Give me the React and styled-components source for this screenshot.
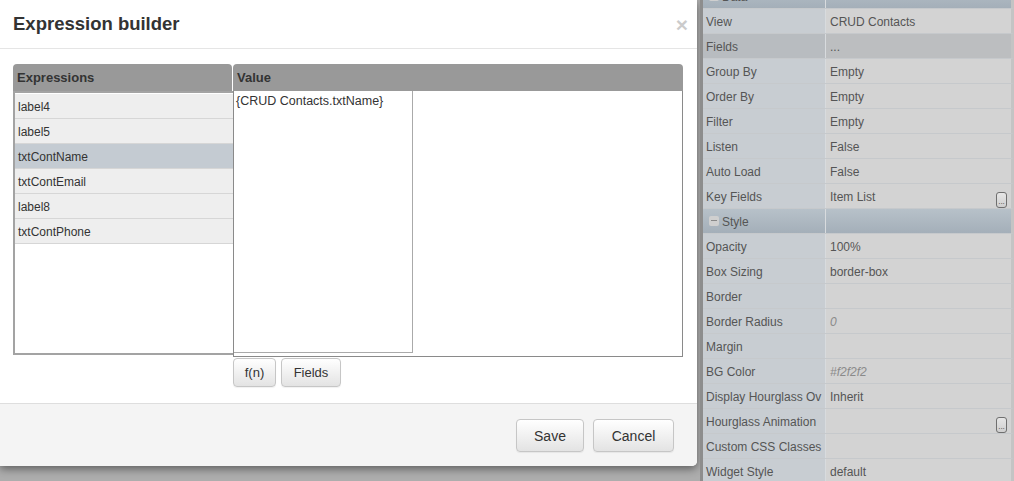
import React from "react";
import styled, { createGlobalStyle } from "styled-components";

const Global = createGlobalStyle`
  html, body { margin: 0; padding: 0; }
  body {
    width: 1014px; height: 481px; overflow: hidden;
    font-family: "Liberation Sans", Arial, sans-serif;
    background: #adadad;
  }
`;

const Page = styled.div`
  display: flex;
  width: 1014px;
  height: 481px;
  overflow: hidden;
`;

const Backdrop = styled.div`
  width: 700px;
  flex: none;
  background: #adadad;
`;

const Modal = styled.div`
  width: 697px;
  height: 466px;
  background: #fff;
  display: flex;
  flex-direction: column;
  border-radius: 0 0 5px 0;
  box-shadow: 0 3px 9px rgba(0, 0, 0, 0.45);
  overflow: hidden;
`;

const ModalHeader = styled.div`
  height: 48px;
  border-bottom: 1px solid #e5e5e5;
  display: flex;
  align-items: center;
  justify-content: space-between;
  padding: 0 9px 0 13px;
  box-sizing: content-box;
`;

const Title = styled.h3`
  margin: 0;
  font-size: 18.5px;
  font-weight: bold;
  color: #333;
`;

const Close = styled.span`
  font-size: 21px;
  font-weight: bold;
  color: #000;
  opacity: 0.2;
  line-height: 1;
`;

const ModalBody = styled.div`
  flex: 1;
  padding: 15px 14px 0 13px;
`;

const Grid = styled.div`
  display: grid;
  grid-template-columns: 220px 450px;
  grid-template-rows: 27px 266px;
`;

const HeadCell = styled.div`
  background: #999;
  border-radius: 4px 4px 0 0;
  font-size: 13px;
  font-weight: bold;
  color: #333;
  padding: 6px 4px 0;
  margin-right: ${(p) => (p.$gap ? "1px" : "0")};
  box-sizing: border-box;
`;

const ExprList = styled.div`
  height: 264px;
  border: 2px solid #a3a3a3;
  border-right-width: 1px;
  box-sizing: border-box;
  width: 221px;
  background: #fff;
  display: flex;
  flex-direction: column;
  padding-top: 1px;
`;

const ExprItem = styled.div`
  height: 25px;
  box-sizing: border-box;
  border-bottom: 1px solid #d6d6d6;
  background: ${(p) => (p.$selected ? "#c4cbd2" : "#eeeeee")};
  font-size: 12px;
  color: #333;
  padding: 6px 0 0 3px;
`;

const ValueArea = styled.div`
  height: 266px;
  border-left: 1px solid #8a8a8a;
  border-right: 1px solid #8a8a8a;
  border-bottom: 1px solid #8a8a8a;
  box-sizing: border-box;
  background: #fff;
  padding: 0 0 3px 0;
`;

const ValueText = styled.div`
  width: 179px;
  height: 262px;
  border: 1px solid #aaa;
  border-left: none;
  border-top: none;
  box-sizing: border-box;
  font-size: 12.5px;
  color: #333;
  padding: 3px 0 0 2px;
`;

const Tools = styled.div`
  display: flex;
  gap: 5px;
  margin: 1px 0 0 220px;
`;

const Btn = styled.button`
  font-family: "Liberation Sans", Arial, sans-serif;
  font-size: ${(p) => (p.$big ? "14px" : "13px")};
  color: #333;
  height: ${(p) => (p.$big ? "33px" : "29px")};
  width: ${(p) => p.$w}px;
  padding: 0;
  border: 1px solid #c6c6c6;
  border-radius: 4px;
  background: linear-gradient(#ffffff, #e3e3e3);
  box-shadow: 0 1px 1px rgba(0, 0, 0, 0.06);
`;

const Footer = styled.div`
  height: 63px;
  box-sizing: border-box;
  border-top: 1px solid #dedede;
  background: #f4f4f4;
  display: flex;
  justify-content: flex-end;
  align-items: flex-start;
  gap: 9px;
  padding: 15px 23px 0 0;
`;

/* Property panel */
const Panel = styled.div`
  flex: 1;
  border-left: 3px solid #8d8d8d;
  background: #d3d3d3;
  overflow: hidden;
`;

const PropList = styled.div`
  margin-top: -16px;
  display: flex;
  flex-direction: column;
`;

const Row = styled.div`
  display: grid;
  grid-template-columns: 123px 1fr;
  height: 25px;
  box-sizing: border-box;
  border-bottom: 1px solid #c6c9cc;
  background: ${(p) =>
    p.$group
      ? "linear-gradient(#b7c1c9, #a4afb9)"
      : p.$active
      ? "#bcbec0"
      : "#d3d3d3"};
  border-right: 3px solid #c4c4c4;
`;

const Label = styled.div`
  background: ${(p) =>
    p.$group ? "transparent" : p.$active ? "#b8bcc0" : "#c8cdd2"};
  border-right: 1px solid #d8dbde;
  font-size: 12px;
  color: #555;
  padding: 6px 0 0 3px;
  white-space: nowrap;
  overflow: hidden;
  text-overflow: clip;
  display: flex;
  align-items: flex-start;
  gap: 1px;
`;

const Value = styled.div`
  font-size: 12px;
  color: ${(p) => (p.$italic ? "#8a8a8a" : "#555")};
  font-style: ${(p) => (p.$italic ? "italic" : "normal")};
  padding: 6px 4px 0 4px;
  display: flex;
  justify-content: space-between;
  align-items: flex-start;
`;

const Dots = styled.span`
  width: 9px;
  height: 14px;
  margin-top: 2px;
  border: 1px solid #6f6f6f;
  border-radius: 3px;
  background: linear-gradient(#e6e6e6, #cfcfcf);
  font-size: 8px;
  line-height: 18px;
  text-align: center;
  color: #444;
  font-style: normal;
  overflow: hidden;
`;

const Minus = styled.span`
  width: 10px;
  height: 10px;
  margin: 1px 2px 0 3px;
  border-radius: 2px;
  background: #cfcfcf;
  position: relative;
  flex: none;
  &::after {
    content: "";
    position: absolute;
    left: 2px; right: 2px; top: 4px; height: 1px;
    background: #888;
  }
`;

const props = [
  { group: true, label: "Data" },
  { label: "View", value: "CRUD Contacts" },
  { label: "Fields", value: "...", active: true },
  { label: "Group By", value: "Empty" },
  { label: "Order By", value: "Empty" },
  { label: "Filter", value: "Empty" },
  { label: "Listen", value: "False" },
  { label: "Auto Load", value: "False" },
  { label: "Key Fields", value: "Item List", dots: true },
  { group: true, label: "Style" },
  { label: "Opacity", value: "100%" },
  { label: "Box Sizing", value: "border-box" },
  { label: "Border", value: "" },
  { label: "Border Radius", value: "0", italic: true },
  { label: "Margin", value: "" },
  { label: "BG Color", value: "#f2f2f2", italic: true },
  { label: "Display Hourglass Ov", value: "Inherit" },
  { label: "Hourglass Animation", value: "", dots: true },
  { label: "Custom CSS Classes", value: "" },
  { label: "Widget Style", value: "default" },
];

const exprs = ["label4", "label5", "txtContName", "txtContEmail", "label8", "txtContPhone"];

export default function App() {
  return (
    <Page>
      <Global />
      <Backdrop>
        <Modal>
          <ModalHeader>
            <Title>Expression builder</Title>
            <Close>×</Close>
          </ModalHeader>
          <ModalBody>
            <Grid>
              <HeadCell $gap>Expressions</HeadCell>
              <HeadCell>Value</HeadCell>
              <ExprList>
                {exprs.map((e) => (
                  <ExprItem key={e} $selected={e === "txtContName"}>
                    {e}
                  </ExprItem>
                ))}
              </ExprList>
              <ValueArea>
                <ValueText>{"{CRUD Contacts.txtName}"}</ValueText>
              </ValueArea>
            </Grid>
            <Tools>
              <Btn $w={43}>f(n)</Btn>
              <Btn $w={60}>Fields</Btn>
            </Tools>
          </ModalBody>
          <Footer>
            <Btn $big $w={68}>Save</Btn>
            <Btn $big $w={81}>Cancel</Btn>
          </Footer>
        </Modal>
      </Backdrop>
      <Panel>
        <PropList>
          {props.map((p, i) => (
            <Row key={i} $group={p.group} $active={p.active}>
              <Label $group={p.group} $active={p.active}>
                {p.group && <Minus />}
                {p.label}
              </Label>
              <Value $italic={p.italic}>
                <span>{p.value}</span>
                {p.dots && <Dots>...</Dots>}
              </Value>
            </Row>
          ))}
        </PropList>
      </Panel>
    </Page>
  );
}
